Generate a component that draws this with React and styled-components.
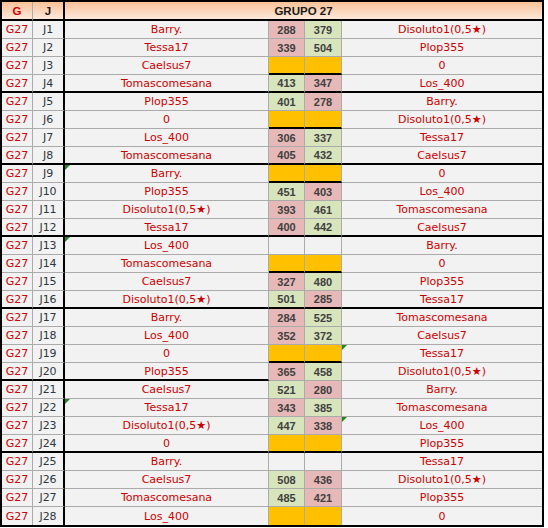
import React from 'react'
import styled, { createGlobalStyle, css } from 'styled-components'

const GlobalStyle = createGlobalStyle`
    body {
        margin: 0;
        background: #ffffff;
    }
`;

const GRID = '#ababab';

const Sheet = styled.div`
    display: grid;
    grid-template-columns: 31px 32px 204px 36px 37px 200px;
    width: fit-content;
    border: 2px solid #000;
    background: #f2f2f2;
    font-family: "DejaVu Sans", Verdana, sans-serif;
    font-size: 11px;
`;

const HeadCell = styled.div`
    grid-column: span ${p => p.$span || 1};
    height: 19px;
    box-sizing: border-box;
    display: flex;
    align-items: center;
    justify-content: center;
    border-bottom: 2px solid #000;
    border-right: ${p => p.$edge || 'none'};
    background: linear-gradient(#f8c196, #fde9dc);
    font-family: "Liberation Sans", Arial, sans-serif;
    font-weight: bold;
    font-size: 11.5px;
    color: ${p => p.$red ? '#d00000' : '#1a1a1a'};
    padding-top: 1px;
`;

const Cell = styled.div`
    position: relative;
    height: 18px;
    box-sizing: border-box;
    display: flex;
    align-items: center;
    justify-content: center;
    white-space: nowrap;
    border-right: ${p => p.$edge || 'none'};
    border-bottom: ${p => p.$last ? 'none' : p.$thick ? '2px solid #000' : `1px solid ${GRID}`};
    color: #cc0000;
    ${p => p.$flag && css`
        &::before {
            content: '';
            position: absolute;
            top: 0;
            left: 0;
            border-top: 5px solid #1c8a1c;
            border-right: 5px solid transparent;
        }
    `}
`;

const Round = styled(Cell)`
    color: #2f3640;
`;

const Score = styled(Cell)`
    font-family: "Liberation Sans", Arial, sans-serif;
    font-weight: bold;
    color: #404040;
    background: ${p => ({ lo: '#e6b8b7', hi: '#d8e4bc', bye: '#ffc000' }[p.$tone] || 'transparent')};
`;

const rows = [
    ['Barry.', 288, 379, 'Disoluto1(0,5★)'],
    ['Tessa17', 339, 504, 'Plop355'],
    ['Caelsus7', 'bye', 'bye', '0'],
    ['Tomascomesana', 413, 347, 'Los_400'],
    ['Plop355', 401, 278, 'Barry.'],
    ['0', 'bye', 'bye', 'Disoluto1(0,5★)'],
    ['Los_400', 306, 337, 'Tessa17'],
    ['Tomascomesana', 405, 432, 'Caelsus7'],
    ['Barry.', 'bye', 'bye', '0'],
    ['Plop355', 451, 403, 'Los_400'],
    ['Disoluto1(0,5★)', 393, 461, 'Tomascomesana'],
    ['Tessa17', 400, 442, 'Caelsus7'],
    ['Los_400', null, null, 'Barry.'],
    ['Tomascomesana', 'bye', 'bye', '0'],
    ['Caelsus7', 327, 480, 'Plop355'],
    ['Disoluto1(0,5★)', 501, 285, 'Tessa17'],
    ['Barry.', 284, 525, 'Tomascomesana'],
    ['Los_400', 352, 372, 'Caelsus7'],
    ['0', 'bye', 'bye', 'Tessa17'],
    ['Plop355', 365, 458, 'Disoluto1(0,5★)'],
    ['Caelsus7', 521, 280, 'Barry.'],
    ['Tessa17', 343, 385, 'Tomascomesana'],
    ['Disoluto1(0,5★)', 447, 338, 'Los_400'],
    ['0', 'bye', 'bye', 'Plop355'],
    ['Barry.', null, null, 'Tessa17'],
    ['Caelsus7', 508, 436, 'Disoluto1(0,5★)'],
    ['Tomascomesana', 485, 421, 'Plop355'],
    ['Los_400', 'bye', 'bye', '0'],
];

// thick black rules under these rounds
const fullRule = [4, 8, 12, 16, 24];
const leftRule = [20];
const flagHome = [9, 13, 22];
const flagAway = [19, 23];

const thin = `1px solid ${GRID}`;
const heavy = '2px solid #000';

function tone(a, b, mine) {
    if (a === 'bye') return 'bye';
    if (a == null) return '';
    return mine > (mine === a ? b : a) ? 'hi' : 'lo';
}

function App() {
    return (
        <>
            <GlobalStyle />
            <Sheet>
                <HeadCell $red $edge={thin}>G</HeadCell>
                <HeadCell $edge={heavy}>J</HeadCell>
                <HeadCell $span={4}>GRUPO 27</HeadCell>

                {rows.map(([home, a, b, away], i) => {
                    const j = i + 1;
                    const last = j === rows.length;
                    const full = fullRule.includes(j);
                    const left = full || leftRule.includes(j);
                    const scoreRule = full || a === 'bye';
                    return (
                        <React.Fragment key={j}>
                            <Cell $edge={thin} $thick={left} $last={last}>G27</Cell>
                            <Round $edge={heavy} $thick={left} $last={last}>J{j}</Round>
                            <Cell $edge={thin} $thick={left} $last={last} $flag={flagHome.includes(j)}>{home}</Cell>
                            <Score $edge={thin} $thick={scoreRule} $last={last} $tone={tone(a, b, a)}>
                                {a === 'bye' ? '' : a}
                            </Score>
                            <Score $edge={thin} $thick={scoreRule} $last={last} $tone={tone(a, b, b)}>
                                {b === 'bye' ? '' : b}
                            </Score>
                            <Cell $thick={full} $last={last} $flag={flagAway.includes(j)}>{away}</Cell>
                        </React.Fragment>
                    )
                })}
            </Sheet>
        </>
    )
}

export default App
